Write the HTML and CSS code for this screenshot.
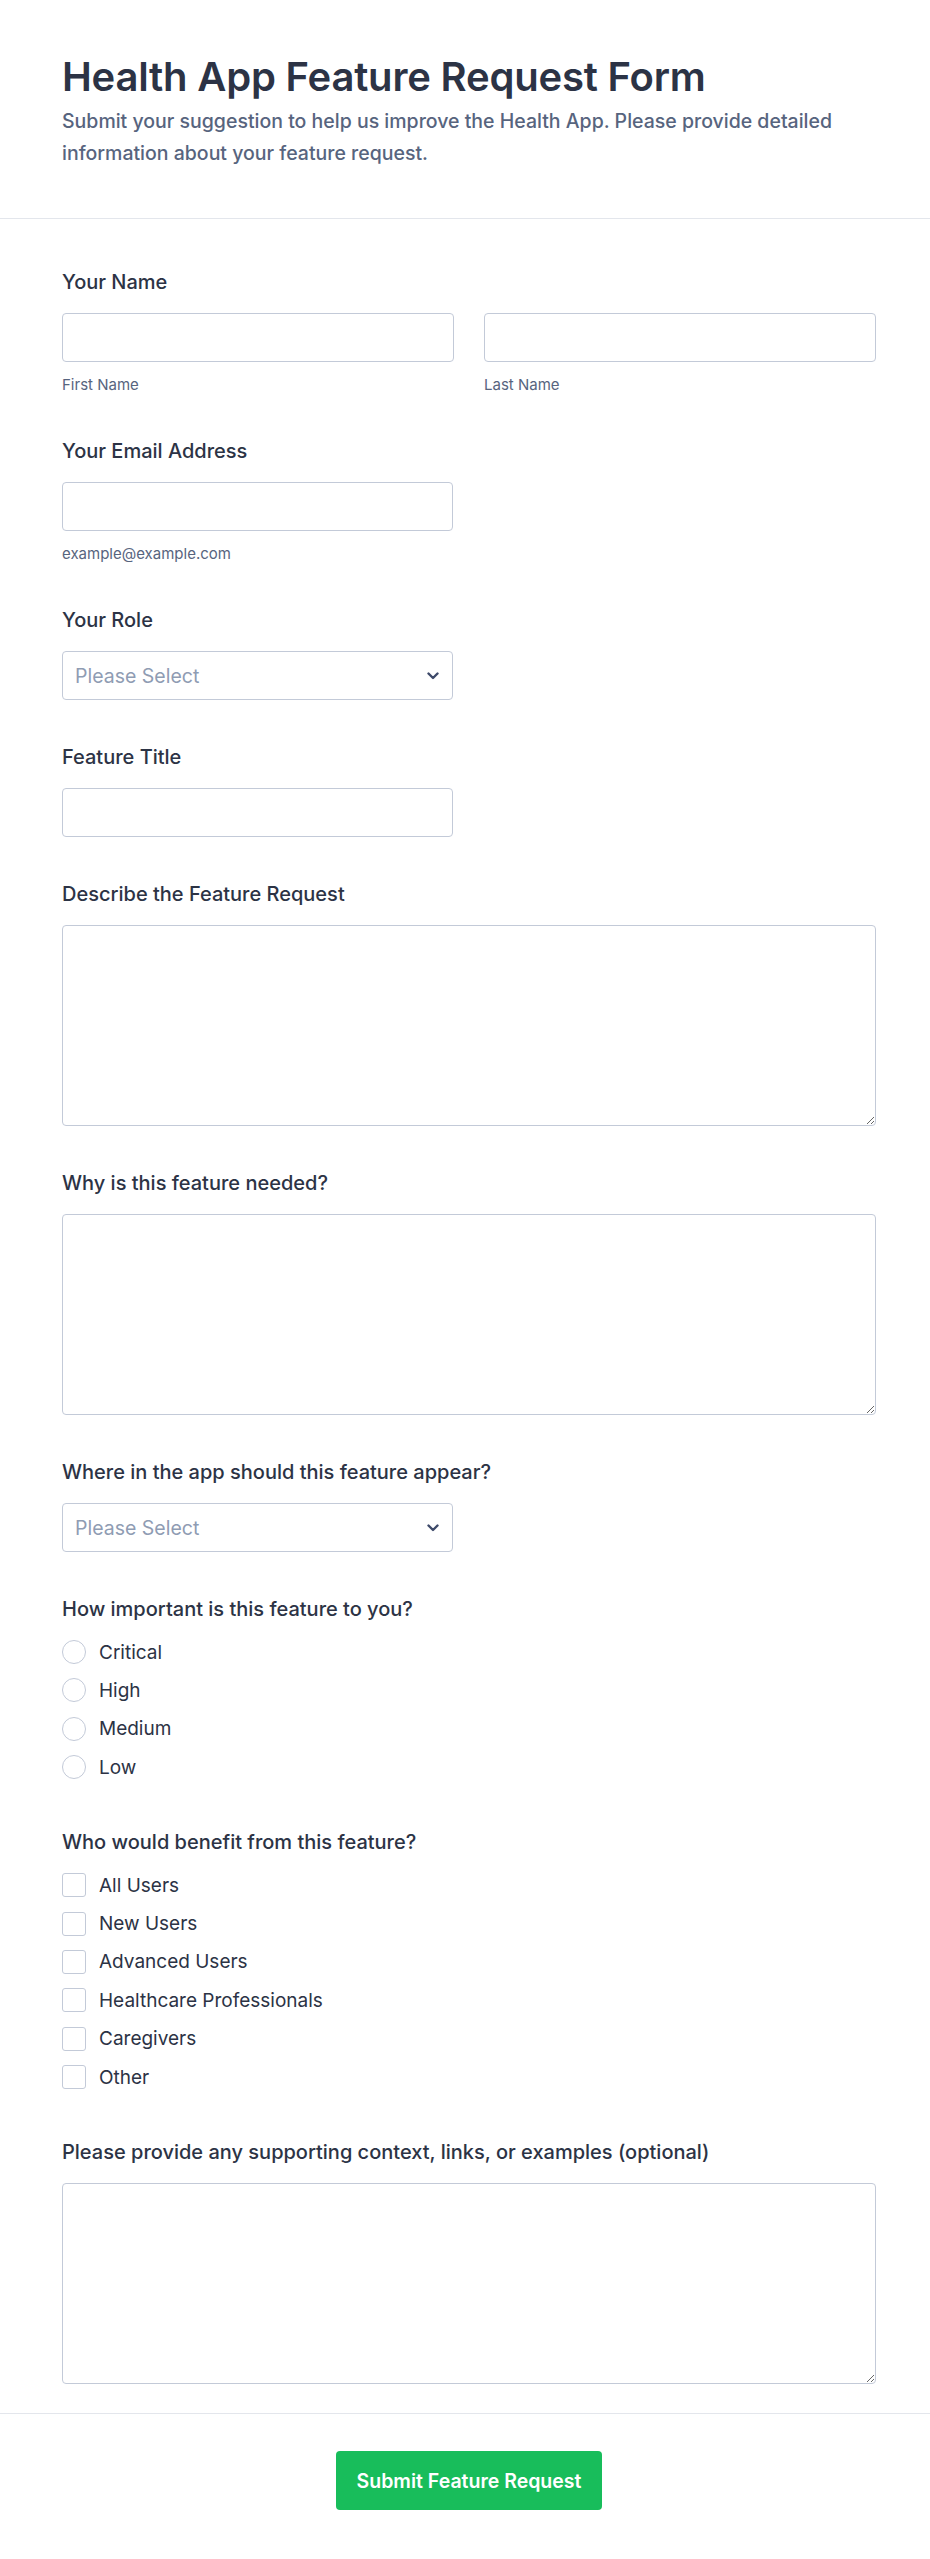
FILE: index.html
```html
<!DOCTYPE html>
<html lang="en">
<head>
<meta charset="utf-8">
<title>Health App Feature Request Form</title>
<link rel="stylesheet" href="styles.css">
</head>
<body>
<div class="page">
  <header class="header">
    <h1 class="title">Health App Feature Request Form</h1>
    <p class="subtitle">Submit your suggestion to help us improve the Health App. Please provide detailed information about your feature request.</p>
  </header>

  <form class="form">
    <div class="field">
      <div class="label">Your Name</div>
      <div class="name-row">
        <div class="sub-field">
          <input class="input" type="text">
          <div class="sublabel">First Name</div>
        </div>
        <div class="sub-field">
          <input class="input" type="text">
          <div class="sublabel">Last Name</div>
        </div>
      </div>
    </div>

    <div class="field">
      <div class="label">Your Email Address</div>
      <div class="half">
        <input class="input" type="email">
        <div class="sublabel">example@example.com</div>
      </div>
    </div>

    <div class="field">
      <div class="label">Your Role</div>
      <div class="half">
        <div class="select"><span class="placeholder">Please Select</span>
          <svg class="chevron" width="12" height="8" viewBox="0 0 12 8"><path d="M1.5 1.5 L6 6 L10.5 1.5" fill="none" stroke="#3e4a6a" stroke-width="2.4" stroke-linecap="round" stroke-linejoin="round"/></svg>
        </div>
      </div>
    </div>

    <div class="field">
      <div class="label">Feature Title</div>
      <div class="half">
        <input class="input" type="text">
      </div>
    </div>

    <div class="field">
      <div class="label">Describe the Feature Request</div>
      <textarea class="textarea"></textarea>
    </div>

    <div class="field">
      <div class="label">Why is this feature needed?</div>
      <textarea class="textarea"></textarea>
    </div>

    <div class="field">
      <div class="label">Where in the app should this feature appear?</div>
      <div class="half">
        <div class="select"><span class="placeholder">Please Select</span>
          <svg class="chevron" width="12" height="8" viewBox="0 0 12 8"><path d="M1.5 1.5 L6 6 L10.5 1.5" fill="none" stroke="#3e4a6a" stroke-width="2.4" stroke-linecap="round" stroke-linejoin="round"/></svg>
        </div>
      </div>
    </div>

    <div class="field group">
      <div class="label">How important is this feature to you?</div>
      <div class="options">
        <label class="option"><span class="radio"></span>Critical</label>
        <label class="option"><span class="radio"></span>High</label>
        <label class="option"><span class="radio"></span>Medium</label>
        <label class="option"><span class="radio"></span>Low</label>
      </div>
    </div>

    <div class="field group">
      <div class="label">Who would benefit from this feature?</div>
      <div class="options">
        <label class="option"><span class="check"></span>All Users</label>
        <label class="option"><span class="check"></span>New Users</label>
        <label class="option"><span class="check"></span>Advanced Users</label>
        <label class="option"><span class="check"></span>Healthcare Professionals</label>
        <label class="option"><span class="check"></span>Caregivers</label>
        <label class="option"><span class="check"></span>Other</label>
      </div>
    </div>

    <div class="field last">
      <div class="label">Please provide any supporting context, links, or examples (optional)</div>
      <textarea class="textarea"></textarea>
    </div>
  </form>

  <footer class="footer">
    <button class="submit" type="button">Submit Feature Request</button>
  </footer>
</div>
</body>
</html>
```

FILE: styles.css
```css
* {
  box-sizing: border-box;
}

html, body {
  margin: 0;
  padding: 0;
  background: #ffffff;
}

body {
  font-family: Inter, "Noto Sans", "Liberation Sans", sans-serif;
  color: #2c3345;
}

.page {
  width: 930px;
  min-height: 2559px;
  display: flex;
  flex-direction: column;
}

.header {
  padding: 55px 54px 49px 62px;
  border-bottom: 1px solid #e3e6ec;
}

.title {
  margin: 0;
  font-size: 40px;
  line-height: 44px;
  font-weight: 600;
  color: #2c3345;
  letter-spacing: -0.2px;
}

.subtitle {
  margin: 6px 0 0;
  font-size: 19.5px;
  line-height: 32px;
  font-weight: 500;
  color: #57647e;
}

.form {
  padding: 51px 54px 29px 62px;
  display: flex;
  flex-direction: column;
  gap: 45px;
  border-bottom: 1px solid #e3e6ec;
}

.field {
  display: flex;
  flex-direction: column;
}

.field.group {
  padding-bottom: 6px;
}

.label {
  font-size: 20px;
  line-height: 24px;
  font-weight: 500;
  color: #2c3345;
  margin-bottom: 19px;
}

.name-row {
  display: grid;
  grid-template-columns: 1fr 1fr;
  gap: 30px;
}

.sub-field {
  display: flex;
  flex-direction: column;
}

.half {
  width: 391px;
  display: flex;
  flex-direction: column;
}

.input {
  display: block;
  width: 100%;
  height: 49px;
  border: 1px solid #c3cad8;
  border-radius: 4px;
  background: #fff;
  font: inherit;
  padding: 0 12px;
  outline: none;
}

.sublabel {
  margin-top: 14px;
  font-size: 15px;
  line-height: 18px;
  color: #57647e;
}

.select {
  height: 49px;
  border: 1px solid #c3cad8;
  border-radius: 4px;
  background: #fff;
  display: flex;
  align-items: center;
  justify-content: space-between;
  padding: 0 13px 0 12px;
}

.placeholder {
  font-size: 19.5px;
  color: #8f9cb3;
}

.chevron {
  display: block;
}

.textarea {
  display: block;
  width: 100%;
  height: 201px;
  border: 1px solid #c3cad8;
  border-radius: 4px;
  background: #fff;
  font: inherit;
  resize: vertical;
  outline: none;
}

.options {
  display: flex;
  flex-direction: column;
  gap: 14.4px;
}

.option {
  display: flex;
  align-items: center;
  height: 24px;
  font-size: 19px;
  color: #2c3345;
  gap: 13px;
}

.radio {
  width: 24px;
  height: 24px;
  border: 1px solid #c3cad8;
  border-radius: 50%;
  background: #fff;
  flex: none;
}

.check {
  width: 24px;
  height: 24px;
  border: 1px solid #c3cad8;
  border-radius: 3px;
  background: #fff;
  flex: none;
}

.footer {
  display: flex;
  justify-content: center;
  padding: 37px 54px 50px 62px;
}

.submit {
  height: 59px;
  padding: 0 21px;
  background: #18bd5b;
  color: #ffffff;
  border: none;
  border-radius: 4px;
  font-family: Inter, "Noto Sans", "Liberation Sans", sans-serif;
  font-size: 19.5px;
  font-weight: 600;
}
```
